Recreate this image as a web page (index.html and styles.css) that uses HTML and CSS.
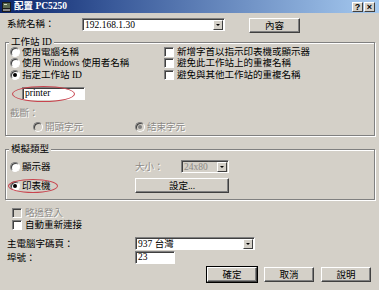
FILE: index.html
```html
<!DOCTYPE html>
<html lang="zh-Hant">
<head>
    <meta charset="UTF-8">
    <title>配置 PC5250</title>
    <link rel="stylesheet" href="styles.css">
</head>
<body>
    <div class="window">
        <div class="titlebar">
            <svg class="app-icon" width="9" height="10" viewBox="0 0 9 10">
                <rect x="0" y="0" width="9" height="10" fill="#1a1a1a"/>
                <rect x="1" y="1" width="7" height="5" fill="#5a6a50"/>
                <rect x="2" y="2" width="3" height="1" fill="#d8e0c8"/>
                <rect x="1" y="7" width="7" height="2" fill="#8a8a8a"/>
            </svg>
            <span class="title">配置 PC5250</span>
            <div class="title-btns">
                <span class="tbtn">?</span>
                <span class="tbtn">×</span>
            </div>
        </div>

        <div class="content">
            <div class="sys-row">
                <span class="lbl sys-lbl">系統名稱：</span>
                <div class="combo sys-combo">
                    <span class="combo-text">192.168.1.30</span>
                    <span class="drop"></span>
                </div>
                <button class="btn props-btn">內容</button>
            </div>

            <div class="group group-id">
                <span class="legend">工作站 ID</span>
                <div class="id-grid">
                    <label class="opt"><span class="radio"></span>使用電腦名稱</label>
                    <label class="opt"><span class="check"></span>新增字首以指示印表機或顯示器</label>
                    <label class="opt"><span class="radio"></span>使用 Windows 使用者名稱</label>
                    <label class="opt"><span class="check"></span>避免此工作站上的重複名稱</label>
                    <label class="opt"><span class="radio checked"></span>指定工作站 ID</label>
                    <label class="opt"><span class="check"></span>避免與其他工作站的重複名稱</label>
                </div>
                <div class="name-wrap">
                    <div class="field name-field">printer</div>
                    <span class="mark mark-name"></span>
                </div>
                <div class="lbl disabled trunc-lbl">截斷：</div>
                <div class="trunc-row">
                    <label class="opt disabled trunc-first"><span class="radio off"></span>開頭字元</label>
                    <label class="opt disabled"><span class="radio off checked"></span>結束字元</label>
                </div>
            </div>

            <div class="group group-emu">
                <span class="legend">模擬類型</span>
                <div class="emu-grid">
                    <label class="opt"><span class="radio"></span>顯示器</label>
                    <span class="lbl disabled">大小：</span>
                    <div class="combo size-combo off">
                        <span class="combo-text">24x80</span>
                        <span class="drop"></span>
                    </div>
                    <label class="opt printer-opt"><span class="radio checked"></span>印表機<span class="mark mark-printer"></span></label>
                    <button class="btn setup-btn">設定...</button>
                </div>
            </div>

            <div class="extra-opts">
                <label class="opt disabled"><span class="check off"></span>略過登入</label>
                <label class="opt"><span class="check"></span>自動重新連接</label>
            </div>

            <div class="form-row cp-row">
                <span class="lbl form-lbl">主電腦字碼頁：</span>
                <div class="combo cp-combo">
                    <span class="combo-text">937 台灣</span>
                    <span class="drop"></span>
                </div>
            </div>
            <div class="form-row port-row">
                <span class="lbl form-lbl">埠號：</span>
                <div class="field port-field">23</div>
            </div>

            <div class="actions">
                <button class="btn default">確定</button>
                <button class="btn">取消</button>
                <button class="btn">說明</button>
            </div>
        </div>
    </div>
</body>
</html>
```

FILE: styles.css
```css
* {
    margin: 0;
    padding: 0;
    box-sizing: border-box;
}

body {
    width: 379px;
    height: 290px;
    overflow: hidden;
    background: #d4d0c8;
    font-family: "Liberation Serif", "Noto Sans CJK TC", serif;
    font-size: 9.5px;
    color: #000;
}

.window {
    width: 379px;
    height: 290px;
    background: #d4d0c8;
}

/* title bar */
.titlebar {
    height: 13px;
    display: flex;
    align-items: center;
    padding: 0 4px 0 2px;
    background: linear-gradient(90deg, #0a246a 0%, #3a5a9a 30%, #a6caf0 100%);
}

.app-icon {
    margin-right: 3px;
}

.title {
    color: #fff;
    font-weight: bold;
    font-size: 9.5px;
    line-height: 13px;
}

.title-btns {
    margin-left: auto;
    display: flex;
    gap: 1px;
}

.tbtn {
    width: 11px;
    height: 10px;
    background: #d4d0c8;
    border: 1px solid;
    border-color: #fff #404040 #404040 #fff;
    font-family: "Liberation Sans", sans-serif;
    font-size: 9px;
    font-weight: bold;
    line-height: 8px;
    text-align: center;
}

.content {
    padding: 0 4px 0 5px;
}

/* common controls */
.lbl {
    line-height: 12px;
    white-space: nowrap;
}

.disabled {
    color: #8c8a86;
    text-shadow: 1px 1px 0 #fff;
}

.opt {
    display: flex;
    align-items: center;
    gap: 2px;
    line-height: 12px;
    white-space: nowrap;
}

.radio {
    width: 10px;
    height: 10px;
    border-radius: 50%;
    background: #fff;
    border: 1px solid;
    border-color: #808080 #fff #fff #808080;
    box-shadow: inset 1px 1px 0 #404040;
    position: relative;
    flex: none;
}

.radio.checked::after {
    content: "";
    position: absolute;
    left: 2px;
    top: 2px;
    width: 4px;
    height: 4px;
    border-radius: 50%;
    background: #000;
}

.radio.off {
    background: #d4d0c8;
}

.radio.off.checked::after {
    background: #808080;
}

.check {
    width: 10px;
    height: 10px;
    background: #fff;
    border: 1px solid;
    border-color: #808080 #fff #fff #808080;
    box-shadow: inset 1px 1px 0 #404040;
    flex: none;
    margin-right: 1px;
}

.check.off {
    background: #d4d0c8;
}

.field,
.combo {
    height: 13px;
    background: #fff;
    border: 1px solid;
    border-color: #808080 #fff #fff #808080;
    box-shadow: inset 1px 1px 0 #404040;
    line-height: 11px;
    padding-left: 2px;
    white-space: nowrap;
}

.combo {
    display: flex;
    align-items: center;
    padding: 1px 1px 1px 2px;
}

.combo.off {
    background: #d4d0c8;
    color: #8c8a86;
}

.combo-text {
    flex: 1;
    line-height: 10px;
}

.drop {
    width: 10px;
    height: 10px;
    background: #d4d0c8;
    border: 1px solid;
    border-color: #fff #404040 #404040 #fff;
    position: relative;
    flex: none;
}

.drop::after {
    content: "";
    position: absolute;
    left: 2px;
    top: 3px;
    border-left: 2px solid transparent;
    border-right: 2px solid transparent;
    border-top: 2px solid #000;
}

.btn {
    height: 15px;
    background: #d4d0c8;
    border: 1px solid;
    border-color: #fff #404040 #404040 #fff;
    box-shadow: inset -1px -1px 0 #808080;
    font: inherit;
    line-height: 12px;
    color: #000;
}

.btn.default {
    outline: 1px solid #000;
    outline-offset: 0;
}

/* system row */
.sys-row {
    margin-top: 5px;
    height: 15px;
    display: flex;
    align-items: flex-start;
    padding-left: 2px;
}

.sys-lbl {
    width: 75px;
    margin-top: 0;
}

.sys-combo {
    width: 143px;
}

.props-btn {
    width: 51px;
    margin-left: 24px;
}

/* group boxes */
.group {
    position: relative;
    width: 370px;
    border: 1px solid #808080;
    box-shadow: inset 1px 1px 0 #fff, 1px 1px 0 #fff;
}

.legend {
    position: absolute;
    top: -7px;
    left: 3px;
    padding: 0 2px;
    background: #d4d0c8;
    line-height: 12px;
}

.group-id {
    margin-top: 9px;
    height: 94px;
    padding: 3px 0 0 4px;
}

.id-grid {
    display: grid;
    grid-template-columns: 154px 1fr;
    grid-auto-rows: 11.5px;
}

.name-wrap {
    position: relative;
    width: 63px;
    margin: 6.5px 0 0 12px;
}

.name-field {
    width: 63px;
}

.mark {
    position: absolute;
    border: 1px solid #c8444e;
    border-radius: 50%;
}

.mark-name {
    left: -10px;
    top: -1px;
    width: 63px;
    height: 16px;
}

.trunc-lbl {
    margin-top: 7px;
}

.trunc-row {
    margin-top: 2px;
    display: flex;
    padding-left: 23px;
}

.trunc-first {
    width: 102px;
}

.group-emu {
    margin-top: 13px;
    height: 51px;
    padding: 10px 0 0 4px;
}

.emu-grid {
    display: grid;
    grid-template-columns: 125px 46px 48px;
    grid-template-rows: 13px 15px;
    row-gap: 5px;
    align-items: center;
}

.printer-opt {
    position: relative;
    width: max-content;
}

.mark-printer {
    left: -2px;
    top: -1px;
    width: 50px;
    height: 14px;
}

.setup-btn {
    grid-column: 2 / 4;
    width: 94px;
}

.size-combo {
    width: 48px;
}

/* lower options */
.extra-opts {
    margin-top: 7px;
    padding-left: 7px;
}

.form-row {
    display: flex;
    align-items: center;
    padding-left: 2px;
}

.cp-row {
    margin-top: 6px;
}

.port-row {
    margin-top: 1px;
}

.form-lbl {
    width: 128px;
}

.cp-combo {
    width: 120px;
}

.port-field {
    width: 40px;
}

.actions {
    margin-top: 3px;
    display: flex;
    justify-content: flex-end;
    gap: 7px;
    padding-right: 4px;
}

.actions .btn {
    width: 50px;
}
```
